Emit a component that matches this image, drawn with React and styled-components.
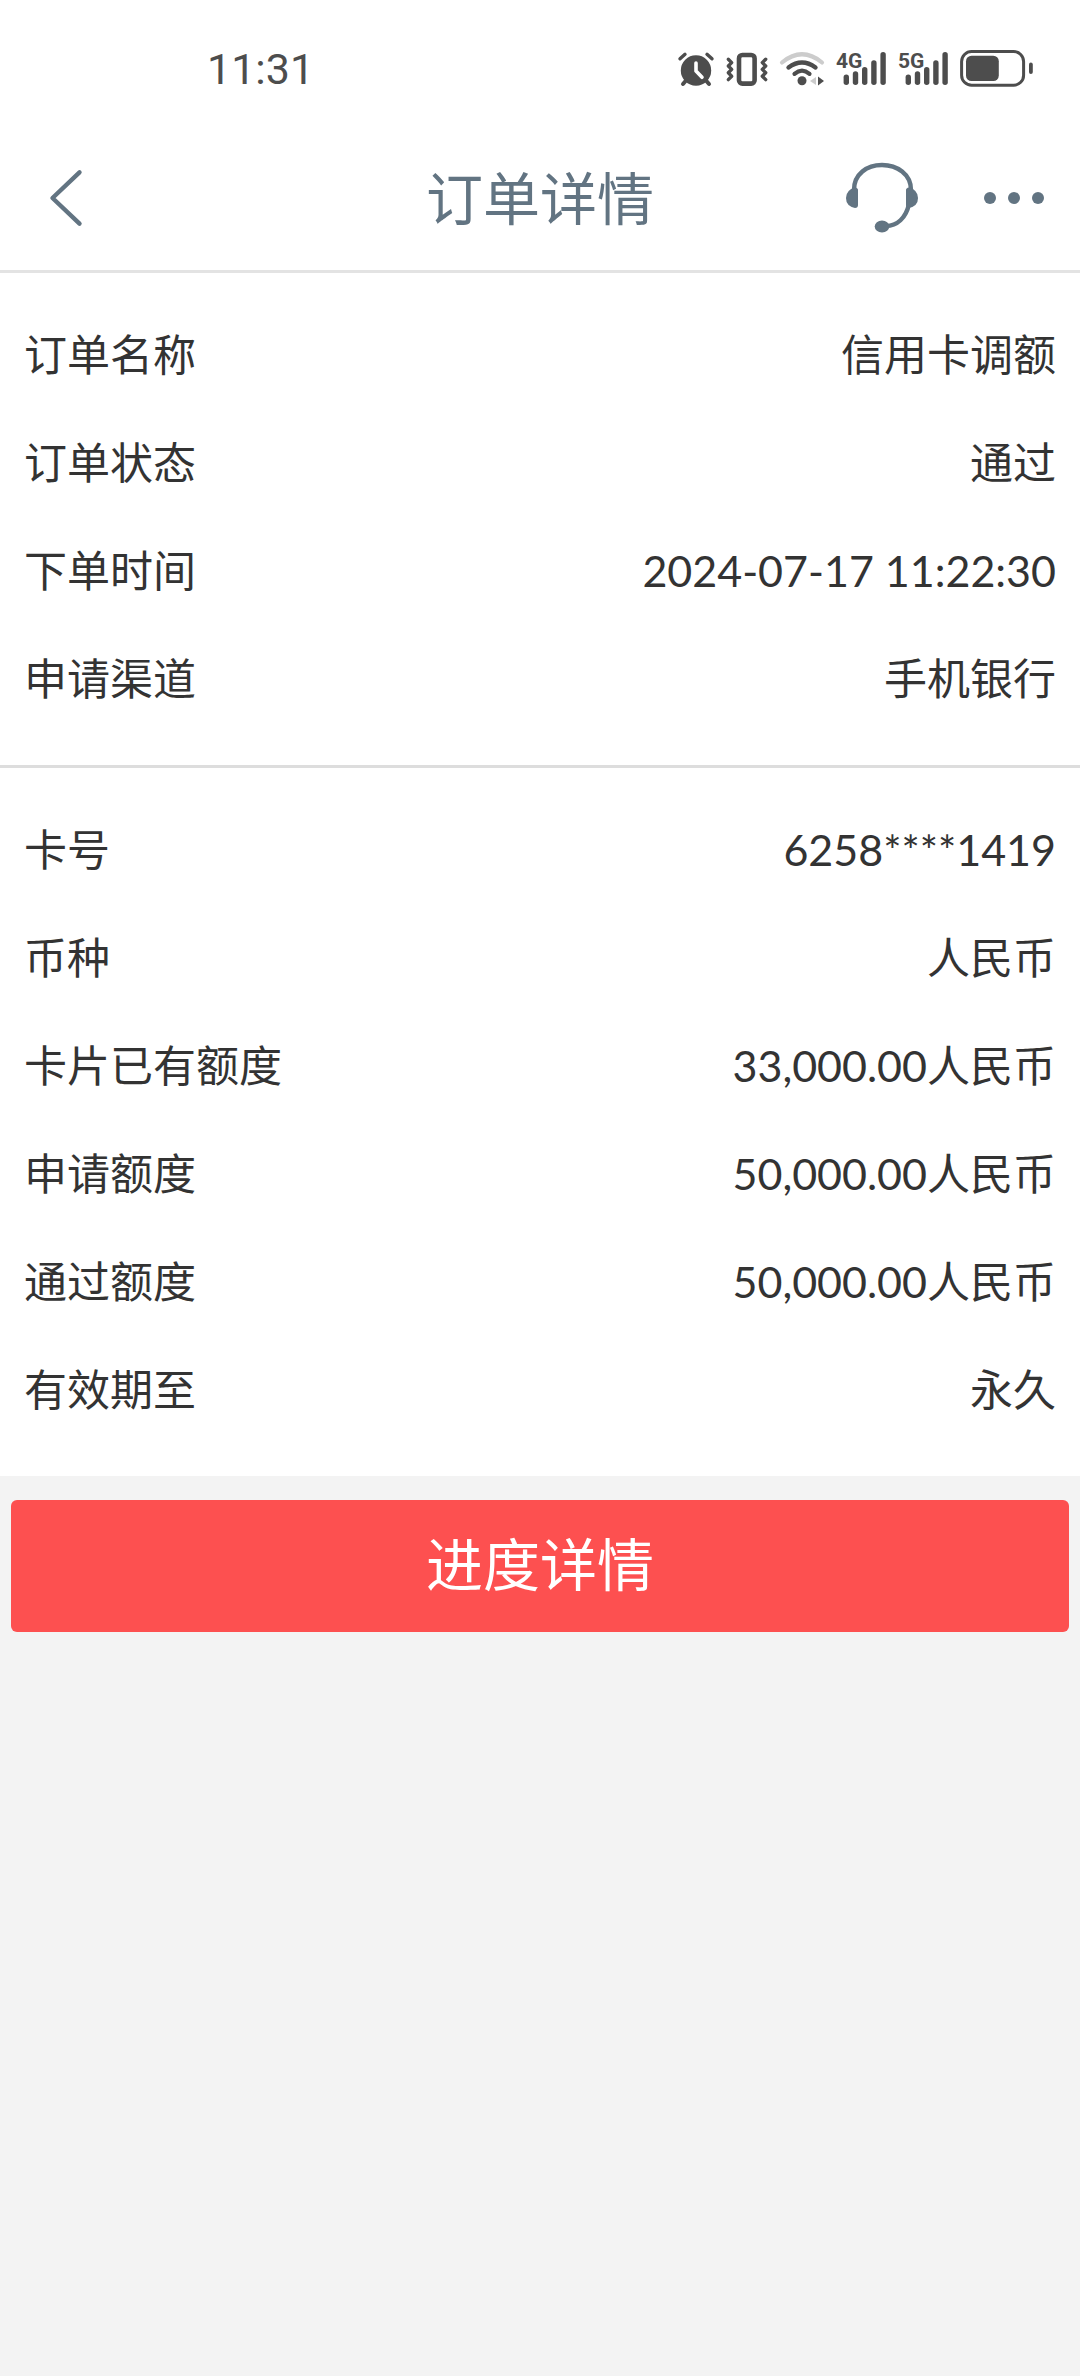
// src/App.jsx
import React from "react";
import styled, { createGlobalStyle } from "styled-components";

const GlobalStyle = createGlobalStyle`
    body {
        margin: 0;
        background: #f3f3f3;
        color: #333333;
        font-family: Lato, "Noto Sans CJK SC", sans-serif;
    }
`;

const StatusBar = styled.div`
    display: flex;
    align-items: center;
    justify-content: space-between;
    height: 118px;
    padding: 10px 46px 0 207px;
    background: #ffffff;
    color: #4d4d4d;
`;

const Time = styled.time`
    font-family: Roboto, sans-serif;
    font-size: 43px;
    line-height: 48px;
`;

const StatusIcons = styled.div`
    display: flex;
    align-items: center;
    gap: 12px;

    svg {
        display: block;
        overflow: visible;
    }
`;

const Header = styled.header`
    display: grid;
    grid-template-columns: 1fr auto 1fr;
    align-items: center;
    height: 140px;
    padding: 0 36px 2px;
    background: #ffffff;
    border-bottom: 3px solid #e3e3e3;
    color: #627482;
`;

const Title = styled.h1`
    margin: 0;
    font-size: 57px;
    font-weight: 400;
    line-height: 72px;
`;

const Actions = styled.div`
    display: flex;
    align-items: center;
    justify-content: flex-end;
    gap: 66px;
`;

const IconButton = styled.button`
    justify-self: start;
    padding: 0;
    border: 0;
    background: none;
    color: inherit;
    cursor: pointer;

    svg {
        display: block;
    }
`;

const Section = styled.dl`
    margin: 0;
    padding: 28px 24px 32px;
    background: #ffffff;

    & + & {
        border-top: 3px solid #dddddd;
    }
`;

const Row = styled.div`
    display: flex;
    align-items: center;
    justify-content: space-between;
    height: 108px;
    font-size: 43px;
    line-height: 60px;
`;

const Label = styled.dt`
    white-space: nowrap;
`;

const Value = styled.dd`
    margin: 0;
    text-align: right;
`;

const Footer = styled.div`
    padding: 24px 11px;
`;

const SubmitButton = styled.button`
    display: block;
    width: 100%;
    height: 132px;
    padding: 0 0 4px;
    border: 0;
    border-radius: 6px;
    background: #fd5050;
    color: #ffffff;
    font-family: inherit;
    font-size: 57px;
    line-height: 72px;
    cursor: pointer;
`;

const AlarmIcon = () => (
    <svg width="37" height="38" viewBox="677 50 37 38" fill="none" stroke="currentColor" strokeLinecap="round">
        <circle cx="696" cy="70.5" r="15.2" fill="currentColor" stroke="none" />
        <path d="M685 54.3L680 58.8M707 54.3L712 58.8" strokeWidth="3.4" />
        <path d="M686 80.5L683 84M706 80.5L709 84" strokeWidth="4" />
        <path d="M696 63V71L702 77.3" stroke="#ffffff" strokeWidth="3.6" strokeLinejoin="round" />
    </svg>
);

const VibrateIcon = () => (
    <svg width="42" height="38" viewBox="726 50 42 38" fill="none" stroke="currentColor" strokeLinecap="round" strokeLinejoin="round">
        <rect x="739" y="55" width="15.6" height="28.6" rx="3.4" strokeWidth="4.6" />
        <path d="M728.3 59.2L731.7 62.6L728.3 66L731.7 69.4L728.3 72.8L731.7 76.2L728.3 79.6" strokeWidth="3.4" />
        <path d="M765.7 59.2L762.3 62.6L765.7 66L762.3 69.4L765.7 72.8L762.3 76.2L765.7 79.6" strokeWidth="3.4" />
    </svg>
);

const WifiIcon = () => (
    <svg width="44" height="38" viewBox="780 50 44 38" fill="none" stroke="currentColor" strokeLinecap="round">
        <path d="M782 62.5Q802 46 822 62.5" stroke="#cccccc" strokeWidth="4.2" />
        <path d="M788.5 67.5Q802 57.5 815.5 67.5" strokeWidth="4.4" />
        <path d="M794.5 73.8Q802 67.5 809.5 73.8" strokeWidth="4.2" />
        <circle cx="802" cy="80.7" r="4.5" fill="currentColor" stroke="none" />
        <path d="M810 81L816 77V85Z" fill="#cccccc" stroke="none" />
        <path d="M818 76.5L824 81L818 85.5Z" fill="currentColor" stroke="none" />
    </svg>
);

const SignalIcon = ({ label }) => (
    <svg width="50" height="50" viewBox="836 44 50 50" fill="currentColor">
        <text x="836" y="68" fontFamily="Roboto, sans-serif" fontSize="21" fontWeight="700">{label}</text>
        <rect x="843.6" y="74.6" width="5.4" height="10.4" rx="2.7" />
        <rect x="852.8" y="71.2" width="5.4" height="13.8" rx="2.7" />
        <rect x="862" y="67" width="5.4" height="18" rx="2.7" />
        <rect x="871.2" y="60.2" width="5.4" height="24.8" rx="2.7" />
        <rect x="880.4" y="52" width="5.4" height="33" rx="2.7" />
    </svg>
);

const BatteryIcon = () => (
    <svg width="74" height="38" viewBox="960 50 74 38" fill="currentColor">
        <rect x="961.6" y="51.6" width="62" height="33.6" rx="10" fill="none" stroke="currentColor" strokeWidth="3" />
        <rect x="966" y="55.7" width="32.8" height="25.4" rx="5.5" />
        <rect x="1029" y="62.6" width="3.8" height="11.4" rx="1.9" />
    </svg>
);

const BackIcon = () => (
    <svg width="50" height="64" viewBox="36 166 50 64" fill="none" stroke="currentColor" strokeWidth="4.4" strokeLinecap="round" strokeLinejoin="round">
        <path d="M79.5 172.3L52.5 198L79.5 223.7" />
    </svg>
);

const ServiceIcon = () => (
    <svg width="72" height="72" viewBox="846 162 72 72" fill="currentColor">
        <path d="M854 190C854 174 867 165 882 165S911 174 911 190" fill="none" stroke="currentColor" strokeWidth="4.4" />
        <path d="M909 204C906 218 897 226 886 226" fill="none" stroke="currentColor" strokeWidth="4.4" />
        <path d="M858 190Q858 188 855 187.5Q846 190 846 198T855 208Q858 208 858 205Z" />
        <path d="M906 190Q906 188 909 187.5Q918 190 918 198T909 208Q906 208 906 205Z" />
        <ellipse cx="882" cy="226.4" rx="7.3" ry="6" />
    </svg>
);

const MoreIcon = () => (
    <svg width="60" height="12" viewBox="0 0 60 12" fill="currentColor">
        <circle cx="6" cy="6" r="6" />
        <circle cx="30" cy="6" r="6" />
        <circle cx="54" cy="6" r="6" />
    </svg>
);

const orderInfo = [
    ["订单名称", "信用卡调额"],
    ["订单状态", "通过"],
    ["下单时间", "2024-07-17 11:22:30"],
    ["申请渠道", "手机银行"],
];

const cardInfo = [
    ["卡号", "6258****1419"],
    ["币种", "人民币"],
    ["卡片已有额度", "33,000.00人民币"],
    ["申请额度", "50,000.00人民币"],
    ["通过额度", "50,000.00人民币"],
    ["有效期至", "永久"],
];

const InfoSection = ({ items }) => (
    <Section>
        {items.map(([label, value]) => (
            <Row key={label}>
                <Label>{label}</Label>
                <Value>{value}</Value>
            </Row>
        ))}
    </Section>
);

const App = () => {
    return (
        <>
            <GlobalStyle />
            <StatusBar>
                <Time>11:31</Time>
                <StatusIcons>
                    <AlarmIcon />
                    <VibrateIcon />
                    <WifiIcon />
                    <SignalIcon label="4G" />
                    <SignalIcon label="5G" />
                    <BatteryIcon />
                </StatusIcons>
            </StatusBar>
            <Header>
                <IconButton type="button" aria-label="返回">
                    <BackIcon />
                </IconButton>
                <Title>订单详情</Title>
                <Actions>
                    <IconButton type="button" aria-label="客服">
                        <ServiceIcon />
                    </IconButton>
                    <IconButton type="button" aria-label="更多">
                        <MoreIcon />
                    </IconButton>
                </Actions>
            </Header>
            <main>
                <InfoSection items={orderInfo} />
                <InfoSection items={cardInfo} />
                <Footer>
                    <SubmitButton type="button">进度详情</SubmitButton>
                </Footer>
            </main>
        </>
    );
};

export default App;
